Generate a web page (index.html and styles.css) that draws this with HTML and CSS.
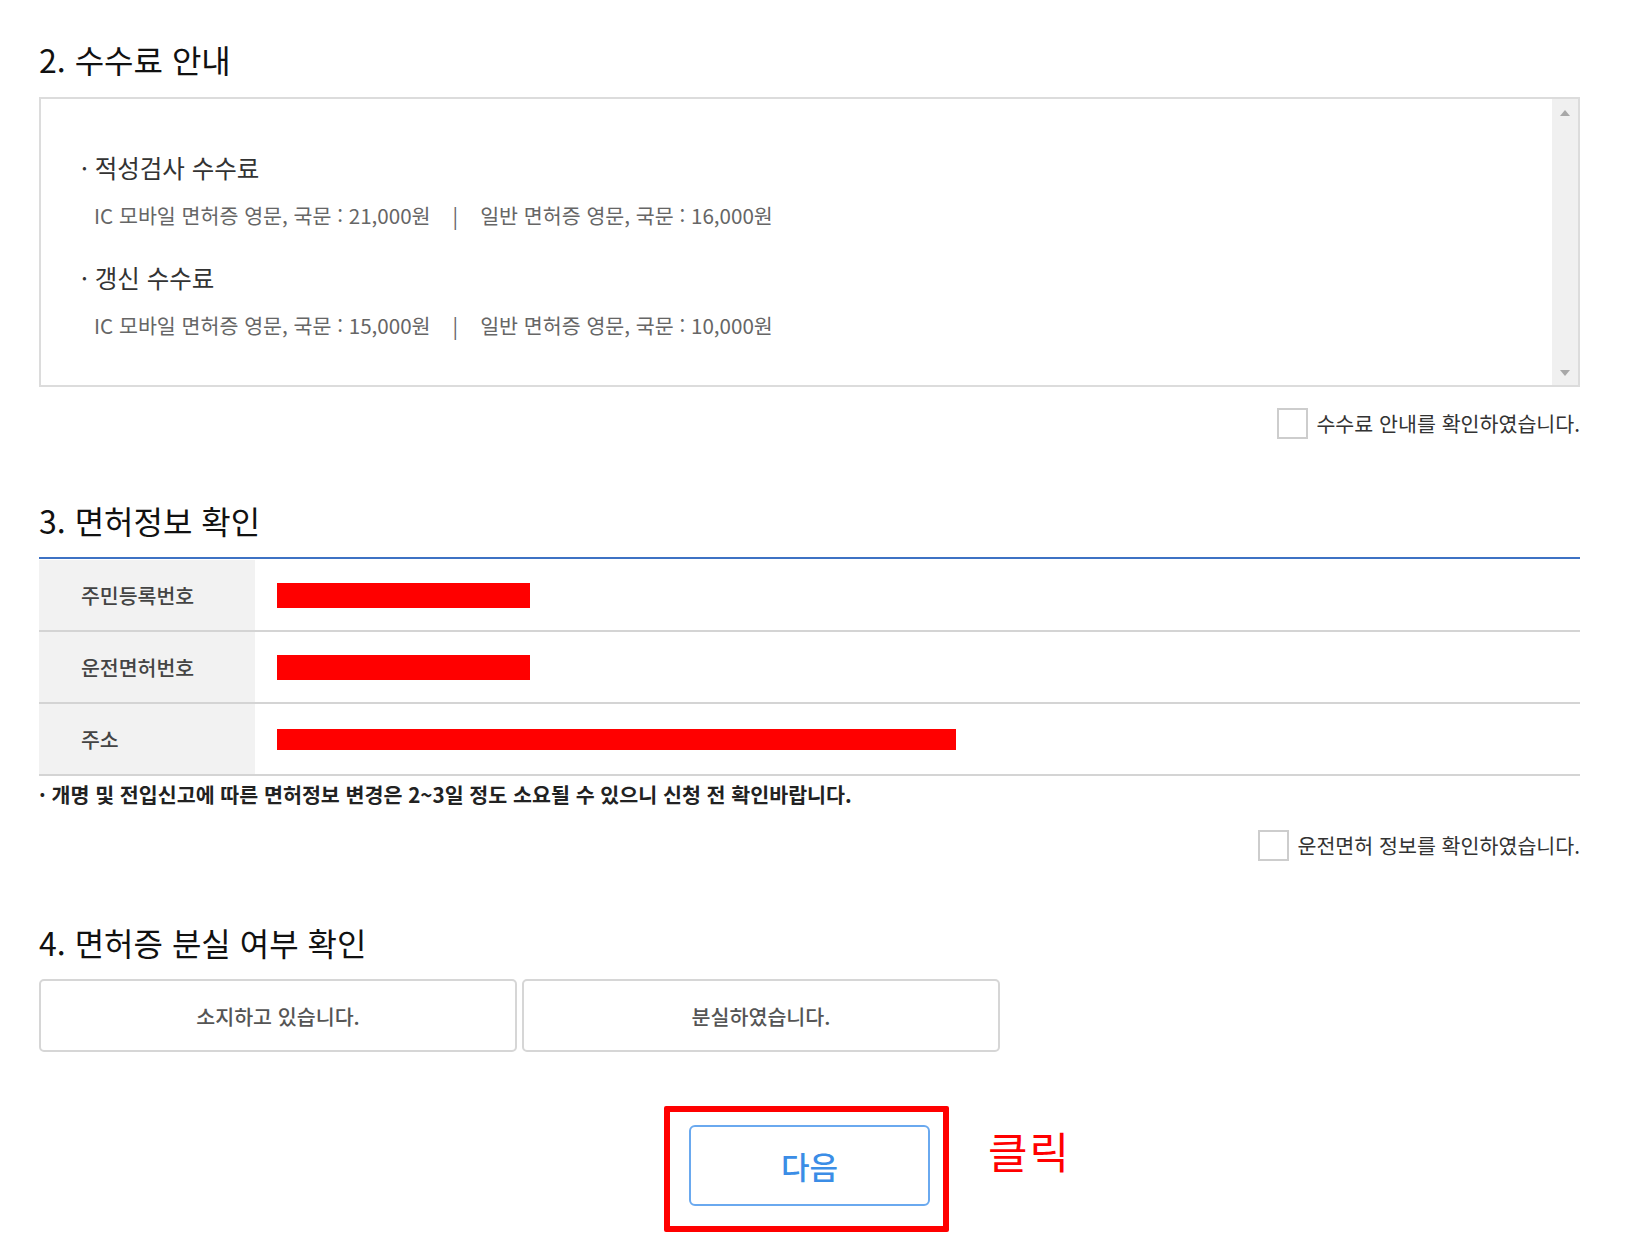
FILE: index.html
```html
<!DOCTYPE html>
<html lang="ko">
<head>
<meta charset="utf-8">
<title>면허증 갱신 신청</title>
<link rel="stylesheet" href="styles.css">
</head>
<body>
<main class="page">
  <section class="sec sec-fee">
    <h2 class="sec-title">2. 수수료 안내</h2>
    <div class="fee-box">
      <div class="fee-content">
        <p class="fee-head">· 적성검사 수수료</p>
        <p class="fee-line">IC 모바일 면허증 영문, 국문 : 21,000원<span class="sep">|</span>일반 면허증 영문, 국문 : 16,000원</p>
        <p class="fee-head">· 갱신 수수료</p>
        <p class="fee-line">IC 모바일 면허증 영문, 국문 : 15,000원<span class="sep">|</span>일반 면허증 영문, 국문 : 10,000원</p>
      </div>
      <div class="scrollbar"><span class="arrow up"></span><span class="arrow down"></span></div>
    </div>
    <label class="agree"><span class="chk"></span><span>수수료 안내를 확인하였습니다.</span></label>
  </section>

  <section class="sec sec-info">
    <h2 class="sec-title">3. 면허정보 확인</h2>
    <div class="info">
      <div class="row"><div class="th">주민등록번호</div><div class="td"><span class="redact"></span></div></div>
      <div class="row"><div class="th">운전면허번호</div><div class="td"><span class="redact"></span></div></div>
      <div class="row"><div class="th">주소</div><div class="td"><span class="redact redact-wide"></span></div></div>
    </div>
    <p class="note">· 개명 및 전입신고에 따른 면허정보 변경은 2~3일 정도 소요될 수 있으니 신청 전 확인바랍니다.</p>
    <label class="agree agree-info"><span class="chk"></span><span>운전면허 정보를 확인하였습니다.</span></label>
  </section>

  <section class="sec sec-lost">
    <h2 class="sec-title">4. 면허증 분실 여부 확인</h2>
    <div class="choices">
      <button class="choice" type="button">소지하고 있습니다.</button>
      <button class="choice" type="button">분실하였습니다.</button>
    </div>
    <div class="next-row">
      <div class="next-wrap">
        <button class="next" type="button">다음</button>
        <span class="highlight"></span>
        <span class="click-note">클릭</span>
      </div>
    </div>
  </section>
</main>
</body>
</html>
```

FILE: styles.css
```css
* { box-sizing: border-box; }
html, body { margin: 0; padding: 0; background: #fff; }
body {
  font-family: "Noto Sans CJK KR", "Noto Sans", sans-serif;
  color: #222;
}
.page {
  width: 1541px;
  margin-left: 39px;
  padding-top: 39px;
  padding-bottom: 31px;
}
.sec-title {
  margin: 0;
  font-size: 32px;
  line-height: 40px;
  font-weight: 400;
  color: #111;
}
.sec-fee .sec-title { margin-bottom: 18px; }

/* fee box */
.fee-box {
  display: flex;
  height: 290px;
  border: 2px solid #dcdcdc;
}
.fee-content {
  flex: 1;
  padding: 52px 0 0 40px;
}
.fee-head {
  margin: 0 0 15px;
  font-size: 24.5px;
  line-height: 34px;
  color: #333;
}
.fee-line {
  margin: 0 0 31px;
  padding-left: 13px;
  font-size: 20.6px;
  line-height: 30px;
  color: #666;
}
.sep { display: inline-block; margin: 0 22px; }
.scrollbar {
  width: 26px;
  background: #f0f0f0;
  display: flex;
  flex-direction: column;
  justify-content: space-between;
  align-items: center;
  padding: 11px 0 9px;
}
.arrow {
  width: 0;
  height: 0;
  border-left: 5.5px solid transparent;
  border-right: 5.5px solid transparent;
}
.arrow.up { border-bottom: 6px solid #a8a8a8; }
.arrow.down { border-top: 6px solid #a8a8a8; }

/* agree checkbox rows */
.agree {
  display: flex;
  justify-content: flex-end;
  align-items: center;
  gap: 8px;
  margin-top: 21px;
  font-size: 20.6px;
  line-height: 31px;
  color: #333;
}
.chk {
  width: 31px;
  height: 31px;
  border: 2px solid #cdcdcd;
  background: #fff;
}
.sec-info { margin-top: 61px; }
.sec-info .sec-title { margin-bottom: 17px; }

/* info table */
.info {
  border-top: 2px solid #3d72c4;
  padding-top: 1px;
}
.row {
  display: grid;
  grid-template-columns: 216px 1fr;
  height: 72px;
  border-bottom: 2px solid #d4d4d4;
}
.th {
  display: flex;
  align-items: center;
  padding-left: 42px;
  background: #f2f2f2;
  font-size: 20.5px;
  font-weight: 500;
  color: #444;
}
.td {
  display: flex;
  align-items: center;
  padding-left: 22px;
}
.redact {
  display: block;
  width: 253px;
  height: 25px;
  background: #ff0000;
}
.redact-wide { width: 679px; height: 21px; }
.note {
  margin: 4px 0 0;
  font-size: 20.6px;
  line-height: 28px;
  font-weight: 700;
  color: #222;
}
.agree-info { margin-top: 22px; }

/* lost */
.sec-lost { margin-top: 61px; }
.sec-lost .sec-title { margin-bottom: 17px; }
.choices {
  display: grid;
  grid-template-columns: 478px 478px;
  gap: 5px;
}
.choice {
  height: 73px;
  border: 2px solid #d6d6d6;
  border-radius: 5px;
  background: #fff;
  font-family: inherit;
  font-size: 20.6px;
  font-weight: 500;
  color: #555;
}
.next-row {
  display: flex;
  justify-content: center;
  margin-top: 73px;
}
.next-wrap { position: relative; }
.next {
  display: block;
  width: 241px;
  height: 81px;
  border: 2px solid #6aa9ef;
  border-radius: 6px;
  background: #fff;
  font-family: inherit;
  font-size: 31px;
  font-weight: 500;
  color: #3b8de6;
}
.highlight {
  position: absolute;
  left: -25px;
  top: -19px;
  width: 285px;
  height: 126px;
  border: 6px solid #ff0000;
  border-radius: 2px;
}
.click-note {
  position: absolute;
  left: 299px;
  top: 0;
  font-size: 43px;
  line-height: 50px;
  color: #ff0000;
  letter-spacing: 2px;
  white-space: nowrap;
}
```
